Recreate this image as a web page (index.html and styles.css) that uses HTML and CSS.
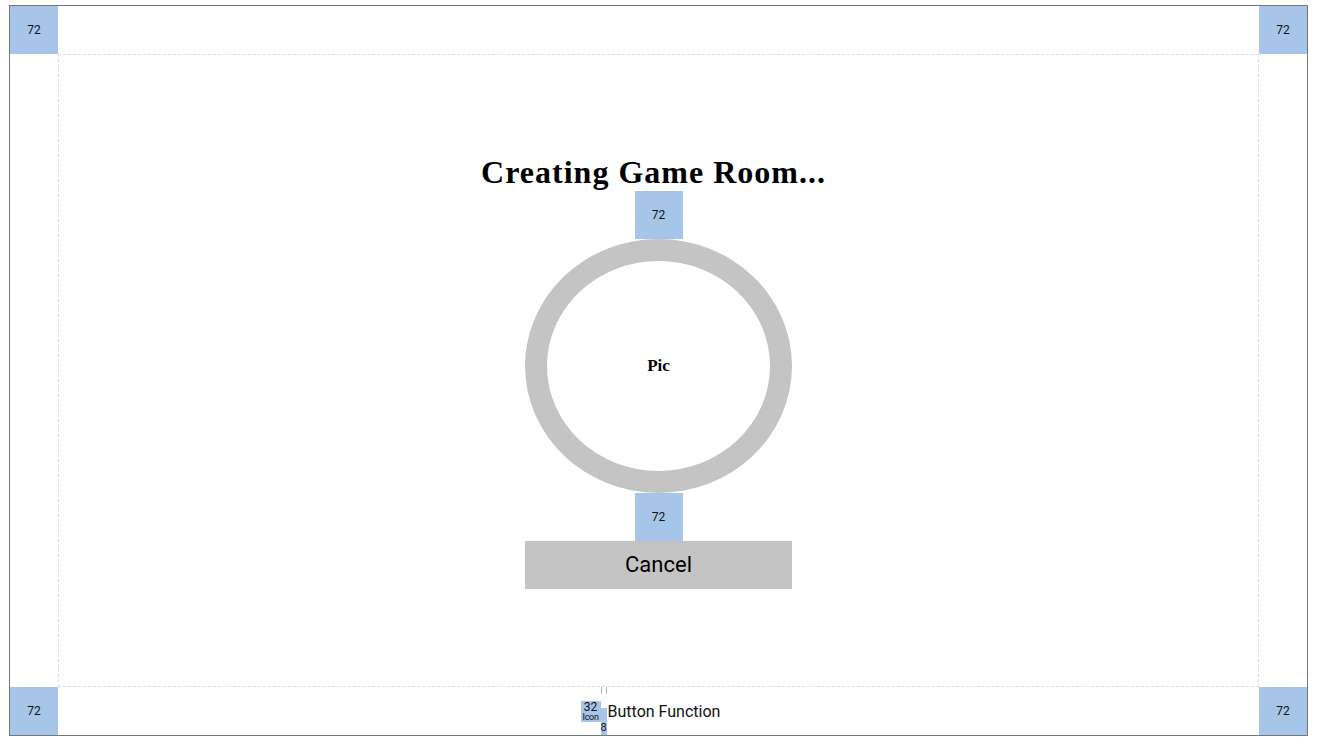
FILE: index.html
```html
<!DOCTYPE html>
<html lang="en">
<head>
    <meta charset="UTF-8">
    <meta name="viewport" content="width=device-width, initial-scale=1.0">
    <title>Creating Game Room</title>
    <link rel="stylesheet" href="styles.css">
</head>
<body>
    <div class="frame">
        <div class="mark">72</div>
        <div class="top-bar"></div>
        <div class="mark">72</div>

        <div class="side"></div>
        <main class="content">
            <h1 class="title">Creating Game Room...</h1>
            <div class="mark">72</div>
            <div class="pic">Pic</div>
            <div class="mark">72</div>
            <button class="cancel">Cancel</button>
        </main>
        <div class="side"></div>

        <div class="mark">72</div>
        <div class="bottom-bar">
            <div class="icon-box">
                <span class="icon-num">32</span>
                <span class="icon-label">Icon</span>
            </div>
            <div class="gap-mark">
                <div class="gap-top"></div>
                <div class="gap-bottom">8</div>
            </div>
            <span class="bar-label">Button Function</span>
        </div>
        <div class="mark">72</div>
    </div>
</body>
</html>
```

FILE: styles.css
```css
body {
    margin: 0;
    background-color: white;
    font-family: Roboto, "Liberation Sans", sans-serif;
}
.frame {
    box-sizing: border-box;
    width: 1299px;
    height: 731px;
    margin: 5px 0 0 9px;
    border: 1px solid #777;
    display: grid;
    grid-template-columns: 48px 1fr 48px;
    grid-template-rows: 48px 1fr 48px;
}
.mark {
    width: 48px;
    height: 48px;
    background-color: #a7c5e9;
    color: #111;
    font-size: 12px;
    display: flex;
    align-items: center;
    justify-content: center;
}
.content {
    border: 1px dashed #dcdcdc;
    display: flex;
    flex-direction: column;
    align-items: center;
    justify-content: center;
}
.title {
    margin: 0 10px 0 0;
    font-family: "Liberation Serif", serif;
    font-weight: bold;
    font-size: 32px;
    line-height: 38px;
    letter-spacing: 1px;
    color: #000;
}
.pic {
    box-sizing: border-box;
    width: 267px;
    height: 254px;
    border: 22px solid #c4c4c4;
    border-radius: 50%;
    display: flex;
    align-items: center;
    justify-content: center;
    font-family: "Liberation Serif", serif;
    font-weight: bold;
    font-size: 17px;
}
.cancel {
    width: 267px;
    height: 48px;
    border: none;
    background-color: #c4c4c4;
    color: #000;
    font-family: Roboto, sans-serif;
    font-size: 22px;
    padding: 0;
}
.bottom-bar {
    display: flex;
    align-items: center;
    justify-content: center;
    padding-right: 16px;
}
.icon-box {
    flex-shrink: 0;
    width: 20px;
    height: 21px;
    background-color: #a7c5e9;
    display: flex;
    flex-direction: column;
    align-items: center;
    justify-content: center;
    color: #111;
    line-height: 1;
}
.icon-num {
    font-size: 12px;
}
.icon-label {
    font-size: 9px;
    letter-spacing: -0.3px;
}
.gap-mark {
    flex-shrink: 0;
    align-self: stretch;
    width: 6px;
    display: flex;
    flex-direction: column;
    justify-content: space-between;
}
.gap-top {
    height: 7px;
    border-left: 1px solid #9dbce4;
    border-right: 1px solid #9dbce4;
}
.gap-bottom {
    height: 27px;
    background-color: #a7c5e9;
    color: #111;
    font-size: 11px;
    line-height: 1;
    display: flex;
    align-items: flex-end;
    justify-content: center;
    padding-bottom: 2px;
    box-sizing: border-box;
}
.bar-label {
    margin-left: 1px;
    font-size: 16px;
    color: #111;
}
```
